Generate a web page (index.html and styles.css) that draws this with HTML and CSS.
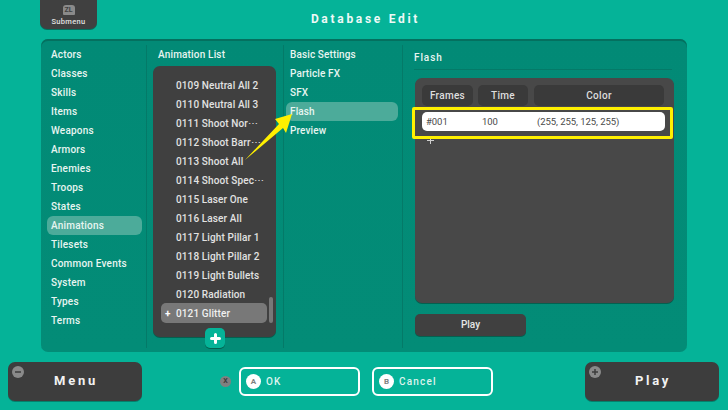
FILE: index.html
```html
<!DOCTYPE html>
<html lang="en">
<head>
<meta charset="utf-8">
<title>Database Edit</title>
<link rel="stylesheet" href="styles.css">
</head>
<body>
<div class="screen">
  <header class="top">
    <div class="submenu"><span class="zl">ZL</span><span class="sub-label">Submenu</span></div>
    <h1 class="title">Database Edit</h1>
  </header>
  <main class="panel">
    <nav class="col cats">
      <div class="cat">Actors</div><div class="cat">Classes</div><div class="cat">Skills</div><div class="cat">Items</div><div class="cat">Weapons</div><div class="cat">Armors</div><div class="cat">Enemies</div><div class="cat">Troops</div><div class="cat">States</div><div class="cat active">Animations</div><div class="cat">Tilesets</div><div class="cat">Common Events</div><div class="cat">System</div><div class="cat">Types</div><div class="cat">Terms</div>
    </nav>
    <section class="col anim">
      <div class="col-title">Animation List</div>
      <div class="list">
        <div class="item">0109 Neutral All 2</div><div class="item">0110 Neutral All 3</div><div class="item">0111 Shoot Nor⋯</div><div class="item">0112 Shoot Barr⋯</div><div class="item">0113 Shoot All</div><div class="item">0114 Shoot Spec⋯</div><div class="item">0115 Laser One</div><div class="item">0116 Laser All</div><div class="item">0117 Light Pillar 1</div><div class="item">0118 Light Pillar 2</div><div class="item">0119 Light Bullets</div><div class="item">0120 Radiation</div><div class="item selected"><span class="mark">+</span>0121 Glitter</div>
        <div class="scroll"></div>
      </div>
      <div class="add"><svg width="11" height="11" viewBox="0 0 11 11"><path d="M5.500 1.500v8M1.500 5.500h8" stroke="#fff" stroke-width="3" stroke-linecap="round"/></svg></div>
    </section>
    <nav class="col tabs">
      <div class="tab">Basic Settings</div><div class="tab">Particle FX</div><div class="tab">SFX</div><div class="tab active">Flash</div><div class="tab">Preview</div>
    </nav>
    <section class="detail">
      <div class="detail-title">Flash</div>
      <div class="table">
        <div class="thead"><div class="th th-f">Frames</div><div class="th th-t">Time</div><div class="th th-c">Color</div></div>
        <div class="row"><span class="c-f">#001</span><span class="c-t">100</span><span>(255, 255, 125, 255)</span></div>
        <svg class="plus" width="7" height="7" viewBox="0 0 7 7"><path d="M3.500 0v7M0 3.500h7" stroke="#cfcfcf" stroke-width="1"/></svg>
      </div>
      <div class="play-small">Play</div>
    </section>
  </main>
  <footer class="bottom">
    <div class="big"><svg class="pin" width="12" height="12" viewBox="0 0 12 12"><circle cx="6" cy="6" r="6" fill="#8a8a8a"/><path d="M3 6h6" stroke="#3d3d3d" stroke-width="1.500"/></svg>Menu</div>
    <div class="center">
      <span class="x">X</span>
      <div class="btn"><span class="round">A</span>OK</div>
      <div class="btn btn-b"><span class="round">B</span>Cancel</div>
    </div>
    <div class="big"><svg class="pin" width="12" height="12" viewBox="0 0 12 12"><circle cx="6" cy="6" r="6" fill="#8a8a8a"/><path d="M3 6h6M6 3v6" stroke="#3d3d3d" stroke-width="1.500"/></svg>Play</div>
  </footer>
  <div class="callout"></div>
  <svg class="arrow" width="60" height="60" viewBox="0 0 60 60"><path d="M1 48L35 12L31 7L48 2L42 21L39 16Z" fill="#fff000"/></svg>
</div>
</body>
</html>
```
FILE: styles.css
```css
* { box-sizing: border-box; }
html, body { margin: 0; padding: 0; }
body { width: 728px; height: 410px; overflow: hidden; background: #05b398; font-family: Roboto, "Noto Sans", sans-serif; font-size: 10px; font-weight: 500; color: #e8f5f1; }
.screen { position: relative; width: 728px; height: 410px; display: flex; flex-direction: column; }
.top { height: 39px; position: relative; display: flex; justify-content: center; }
.submenu { position: absolute; left: 40px; top: 0; width: 57px; height: 29px; background: #404040; border-radius: 0 0 7px 7px; box-shadow: 0 1px 0 #04715f; display: flex; flex-direction: column; align-items: center; color: #e0e0e0; }
.zl { width: 12px; height: 10px; margin-top: 5px; background: #8a8a8a; color: #3f3f3f; border-radius: 3px 3px 1px 1px; font-size: 7px; line-height: 10px; text-align: center; font-weight: 700; }
.sub-label { font-size: 7.500px; line-height: 9px; margin-top: 2px; letter-spacing: .3px; font-weight: 500; }
.title { margin: 0 0 0 3px; padding-top: 11px; font-size: 12px; line-height: 16px; font-weight: 700; letter-spacing: 2.700px; color: #eef9f6; }
.panel { margin-left: 41px; width: 646px; height: 313px; display: flex; background: linear-gradient(#028a76, #038c77); border-radius: 7px; box-shadow: inset 0 2px 0 #04705f; }
.col, .detail { border-right: 1px solid #047a68; margin: 6px 0 4px; }
.cats { width: 106px; padding: 0 4px 0 6px; }
.cat { height: 19px; line-height: 19px; padding-left: 4px; letter-spacing: .2px; border-radius: 6px; }
.cat.active { background: #4cab9a; }
.anim { width: 137px; padding-left: 6px; position: relative; }
.col-title { height: 21px; line-height: 19px; padding-left: 5px; letter-spacing: .17px; }
.list { position: relative; width: 123px; height: 271px; padding-top: 10px; background: #404040; border-radius: 7px; box-shadow: 0 1px 0 #04604f; }
.item { height: 19px; line-height: 19px; padding-left: 23px; letter-spacing: .12px; color: #e2e2e2; white-space: nowrap; }
.item.selected { position: relative; width: 106px; height: 20px; line-height: 21px; margin: -1px 0 0 8px; padding-left: 15px; background: #787878; border-radius: 5px; color: #f0f0f0; }
.mark { position: absolute; left: 4px; font-weight: 700; color: #fff; }
.scroll { position: absolute; right: 3px; top: 231px; width: 4px; height: 26px; background: #787878; border-radius: 2px; }
.add { position: absolute; left: 58px; top: 283px; width: 20px; height: 20px; background: #05b398; border-radius: 5px; box-shadow: 0 1px 0 #04604f; display: flex; align-items: center; justify-content: center; }
.tabs { width: 119px; padding: 0 4px 0 2px; }
.tab { height: 19px; line-height: 20px; padding-left: 4px; letter-spacing: .12px; border-radius: 6px; }
.tab.active { background: #4cab9a; }
.detail { border-right: 0; flex: 1; padding: 0 13px 0 11px; display: flex; flex-direction: column; }
.detail-title { height: 25px; line-height: 26px; letter-spacing: .9px; border-bottom: 1px solid #047a68; margin-right: 2px; }
.table { width: 259px; height: 225px; margin: 8px 0 0 1px; padding: 7px 9px 0 7px; background: #484848; border-radius: 7px; box-shadow: 0 1px 0 #04604f; }
.thead { display: flex; }
.th { height: 21px; line-height: 22px; background: #3a3a3a; border-radius: 5px; text-align: center; letter-spacing: .3px; color: #dedede; }
.th-f { width: 51px; } .th-t { width: 50px; margin-left: 5px; } .th-c { width: 130px; margin-left: 6px; }
.row { display: flex; height: 19px; line-height: 20px; margin-top: 6px; padding-left: 4px; width: 243px; background: #fff; border-radius: 5px; color: #4a4a4a; font-size: 9.500px; font-weight: 400; letter-spacing: -.05px; }
.c-f { width: 56px; } .c-t { width: 55px; }
.plus { display: block; margin: 6px 0 0 5px; }
.play-small { width: 111px; height: 22px; margin: 11px 0 0 1px; line-height: 21px; text-align: center; background: #404040; border-radius: 5px; box-shadow: 0 1px 0 #04604f; color: #e6e6e6; }
.bottom { flex: 1; padding: 10px 9px 0 8px; display: flex; justify-content: space-between; align-items: flex-start; }
.big { position: relative; width: 134px; height: 39px; padding-left: 2px; background: #3d3d3d; border-radius: 7px; box-shadow: 0 1px 0 #04806c; text-align: center; line-height: 38px; font-size: 13px; font-weight: 700; letter-spacing: 2.700px; color: #f2f2f2; }
.pin { position: absolute; left: 4px; top: 4px; }
.center { display: flex; align-items: center; margin: 5px 14px 0 0; }
.x { width: 11px; height: 11px; border-radius: 50%; background: #808080; color: #3a3a3a; font-size: 7px; line-height: 11px; text-align: center; font-weight: 700; margin-right: 8px; }
.btn { width: 121px; height: 29px; border: 2px solid #fff; border-radius: 6px; display: flex; align-items: center; padding-left: 5px; letter-spacing: 1.200px; color: #def3ee; }
.btn-b { margin-left: 12px; }
.round { width: 15px; height: 15px; border-radius: 50%; background: #fff; color: #808080; font-size: 8px; font-weight: 700; line-height: 15px; text-align: center; margin-right: 5px; letter-spacing: 0; }
.callout { position: absolute; left: 412px; top: 107px; width: 261px; height: 32px; border: 3px solid #fff000; border-radius: 2px; }
.arrow { position: absolute; left: 244px; top: 112px; }
```
